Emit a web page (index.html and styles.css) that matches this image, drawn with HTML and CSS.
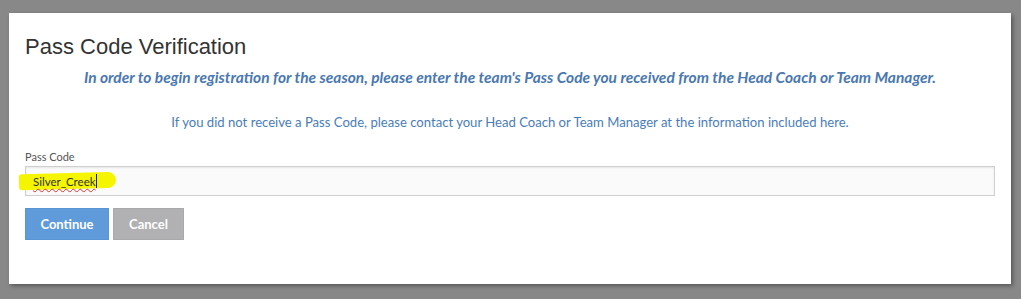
FILE: index.html
```html
<!DOCTYPE html>
<html lang="en">
<head>
    <meta charset="UTF-8">
    <title>Pass Code Verification</title>
    <link rel="stylesheet" href="styles.css">
</head>
<body>
    <div class="modal">
        <h1 class="modal-title">Pass Code Verification</h1>
        <p class="intro">In order to begin registration for the season, please enter the team's Pass Code you received from the Head Coach or Team Manager.</p>
        <p class="note">If you did not receive a Pass Code, please contact your Head Coach or Team Manager at the information included here.</p>

        <label class="field-label">Pass Code</label>
        <div class="field-input">
            <span class="marker"></span>
            <span class="typed">Silver_Creek</span><span class="caret"></span>
        </div>

        <div class="actions">
            <button class="btn btn-primary">Continue</button>
            <button class="btn btn-default">Cancel</button>
        </div>
    </div>
</body>
</html>
```

FILE: styles.css
```css
* {
    margin: 0;
    padding: 0;
    box-sizing: border-box;
}

body {
    background: #888888;
    padding: 13px 10px 15px 9px;
    font-family: Lato, 'Noto Sans', sans-serif;
}

.modal {
    background: #fff;
    height: 271px;
    padding: 22px 16px 0 16px;
    box-shadow: 2px 2px 4px rgba(0, 0, 0, 0.35);
}

.modal-title {
    font-family: 'Liberation Sans', Arial, sans-serif;
    font-weight: normal;
    font-size: 22px;
    line-height: 24px;
    color: #333;
}

.intro {
    margin-top: 8px;
    text-align: center;
    font-style: italic;
    font-weight: bold;
    font-size: 15.5px;
    line-height: 20px;
    color: #4a78b0;
}

.note {
    margin-top: 26px;
    text-align: center;
    font-size: 13.1px;
    line-height: 18px;
    color: #4a7db8;
}

.field-label {
    display: block;
    margin-top: 19px;
    font-size: 11px;
    line-height: 14px;
    color: #555;
}

.field-input {
    position: relative;
    margin-top: 2px;
    height: 30px;
    border: 1px solid #cfcfcf;
    background: #fafafa;
    box-shadow: inset 0 1px 2px rgba(0, 0, 0, 0.08);
    padding: 0 7px;
    display: flex;
    align-items: center;
    font-size: 11.5px;
    color: #333;
}

.marker {
    position: absolute;
    left: -7px;
    top: 6px;
    width: 97px;
    height: 16px;
    background: #f5f500;
    border-radius: 3px 8px 8px 3px;
    transform: rotate(-1.5deg);
}

.typed {
    position: relative;
    text-decoration: underline wavy #e03030;
    text-decoration-thickness: 1px;
    text-underline-offset: 2px;
}

.caret {
    position: relative;
    display: inline-block;
    width: 1px;
    height: 14px;
    background: #222;
}

.actions {
    margin-top: 12px;
    display: flex;
    gap: 4px;
}

.btn {
    height: 32px;
    border: 1px solid transparent;
    font-family: Lato, 'Noto Sans', sans-serif;
    font-weight: bold;
    font-size: 13px;
    color: #fff;
}

.btn-primary {
    width: 84px;
    background: #5f9bdb;
    border-color: #5a95d3;
}

.btn-default {
    width: 71px;
    background: #b1b1b3;
    border-color: #a9a9ab;
}
```
